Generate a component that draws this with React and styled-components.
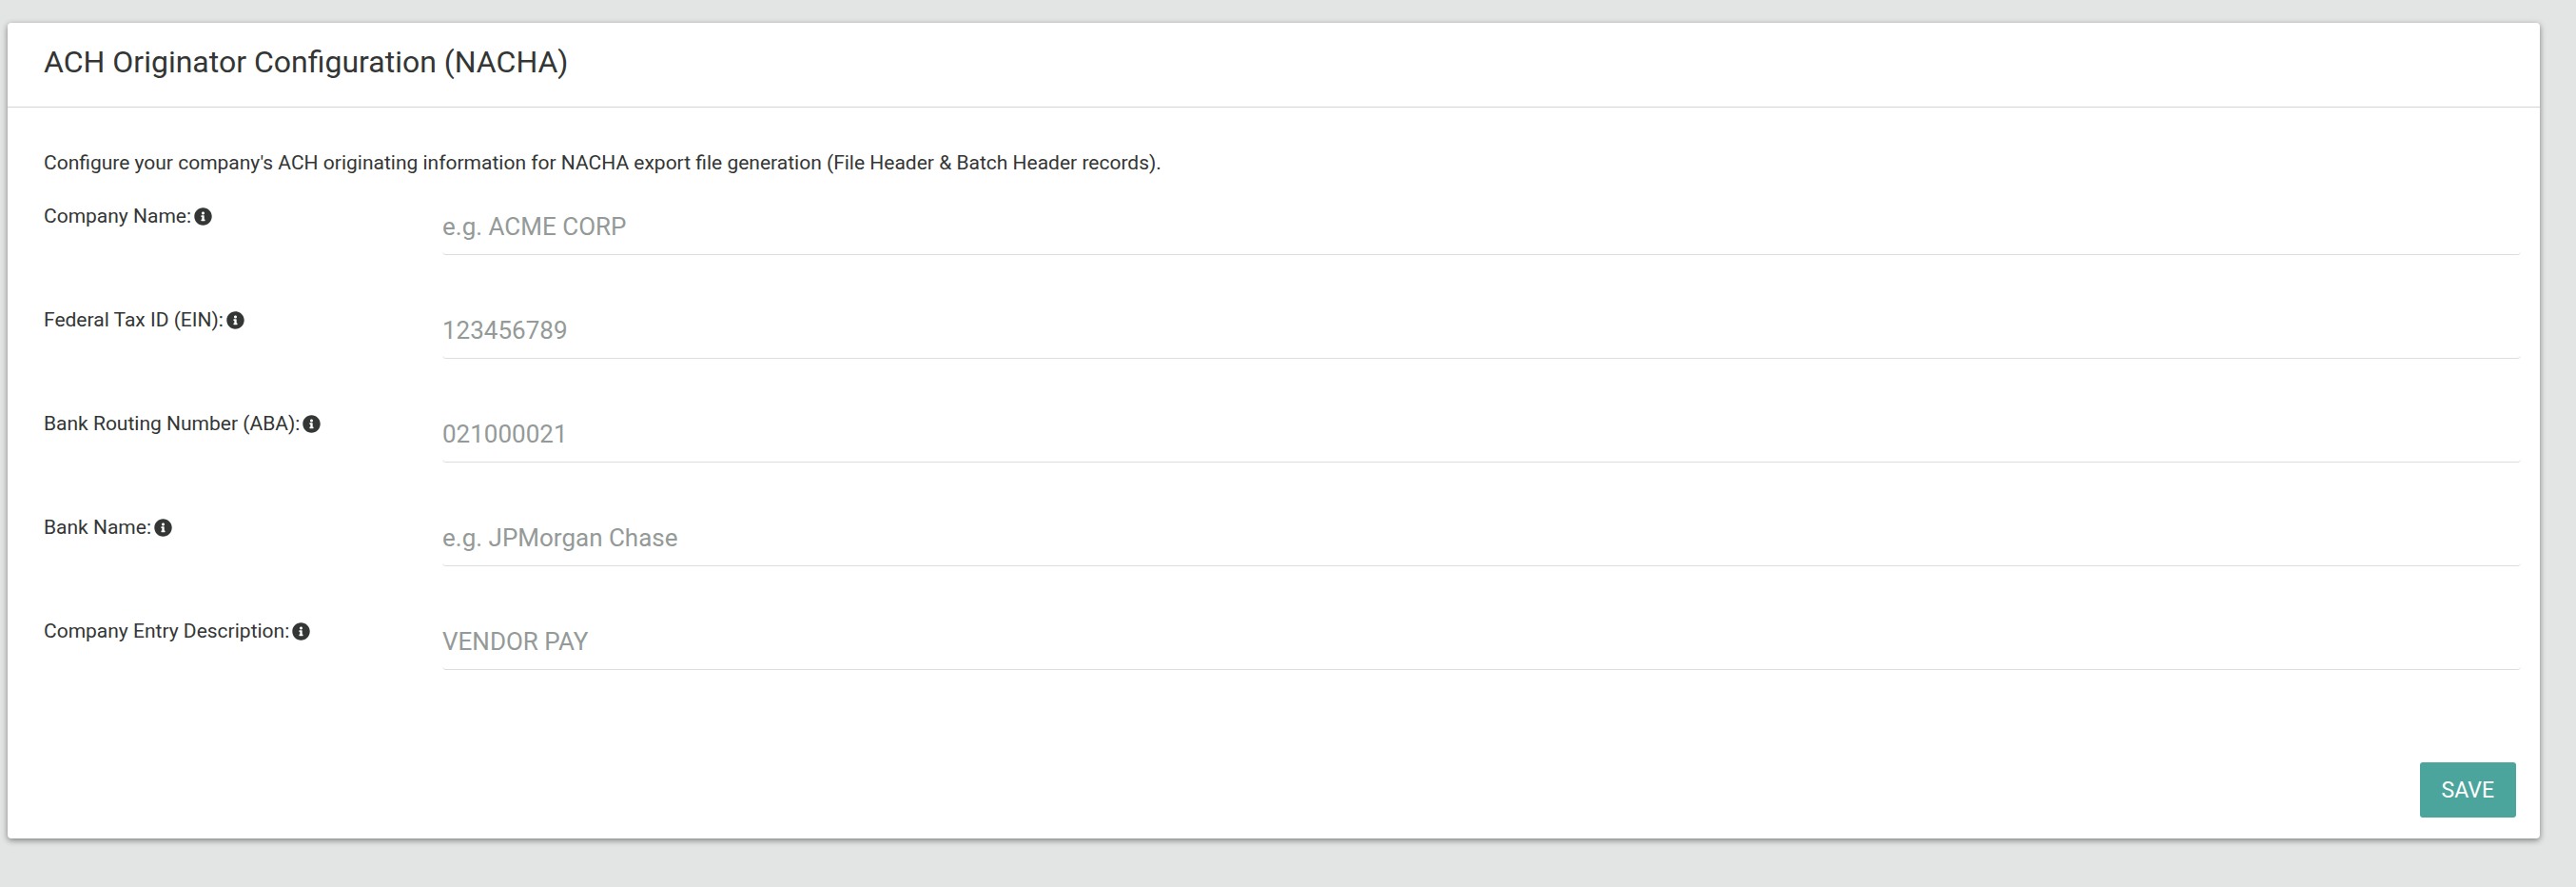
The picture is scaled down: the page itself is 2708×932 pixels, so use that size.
import React from "react";
import styled, { createGlobalStyle } from "styled-components";
import { FaInfoCircle } from "react-icons/fa";

const GlobalStyle = createGlobalStyle`
  * {
    box-sizing: border-box;
  }
  body {
    margin: 0;
    background-color: #e3e5e4;
    color: #333635;
    font-family: Roboto, "Liberation Sans", sans-serif;
    font-size: 21px;
    line-height: 30px;
  }
`;
const Page = styled.main`
  padding: 24px 38px 24px 8px;
`;
const Card = styled.section`
  background-color: #fff;
  border-radius: 4px;
  box-shadow: 0 2px 6px rgba(0, 0, 0, 0.45);
`;
const CardHeader = styled.header`
  padding: 21px 38px 27px;
  border-bottom: 1px solid #d3d5d4;
`;
const CardTitle = styled.h1`
  margin: 0;
  font-size: 32px;
  font-weight: 400;
  line-height: 40px;
`;
const Form = styled.form`
  padding: 43px 20px 22px 38px;
`;
const Description = styled.p`
  margin: 0 0 27px;
`;
const FormRow = styled.div`
  display: flex;
  align-items: flex-start;
  height: 55px;
  margin-bottom: 54px;
`;
const Label = styled.label`
  display: flex;
  align-items: center;
  gap: 3px;
  flex: 0 0 419px;
  line-height: 29px;
`;
const InfoIcon = styled(FaInfoCircle)`
  font-size: 19px;
`;
const Input = styled.input`
  flex: 1;
  min-width: 0;
  height: 55px;
  padding: 0 0 4px;
  border: none;
  border-bottom: 1px solid #dcdedd;
  border-radius: 4px;
  outline: none;
  background: transparent;
  color: #333635;
  font-family: inherit;
  font-size: 26px;
  &::placeholder {
    color: #949a98;
    opacity: 1;
  }
`;
const Actions = styled.div`
  display: flex;
  justify-content: flex-end;
  padding: 43px 5px 0 0;
`;
const SaveButton = styled.button`
  height: 58px;
  padding: 0 23px;
  border: none;
  border-radius: 3px;
  background-color: #4ca59d;
  color: white;
  cursor: pointer;
  font-family: inherit;
  font-size: 23px;
  text-transform: uppercase;
`;

const fields = [
  { id: "companyName", label: "Company Name:", placeholder: "e.g. ACME CORP" },
  { id: "taxId", label: "Federal Tax ID (EIN):", placeholder: "123456789" },
  {
    id: "routingNumber",
    label: "Bank Routing Number (ABA):",
    placeholder: "021000021",
  },
  { id: "bankName", label: "Bank Name:", placeholder: "e.g. JPMorgan Chase" },
  {
    id: "entryDescription",
    label: "Company Entry Description:",
    placeholder: "VENDOR PAY",
  },
];

const App = () => {
  return (
    <Page>
      <GlobalStyle />
      <Card>
        <CardHeader>
          <CardTitle>ACH Originator Configuration (NACHA)</CardTitle>
        </CardHeader>
        <Form onSubmit={(e) => e.preventDefault()}>
          <Description>
            Configure your company's ACH originating information for NACHA
            export file generation (File Header &amp; Batch Header records).
          </Description>
          {fields.map((field) => (
            <FormRow key={field.id}>
              <Label htmlFor={field.id}>
                {field.label}
                <InfoIcon />
              </Label>
              <Input
                type="text"
                id={field.id}
                name={field.id}
                placeholder={field.placeholder}
              />
            </FormRow>
          ))}
          <Actions>
            <SaveButton type="submit">Save</SaveButton>
          </Actions>
        </Form>
      </Card>
    </Page>
  );
};

export default App;
